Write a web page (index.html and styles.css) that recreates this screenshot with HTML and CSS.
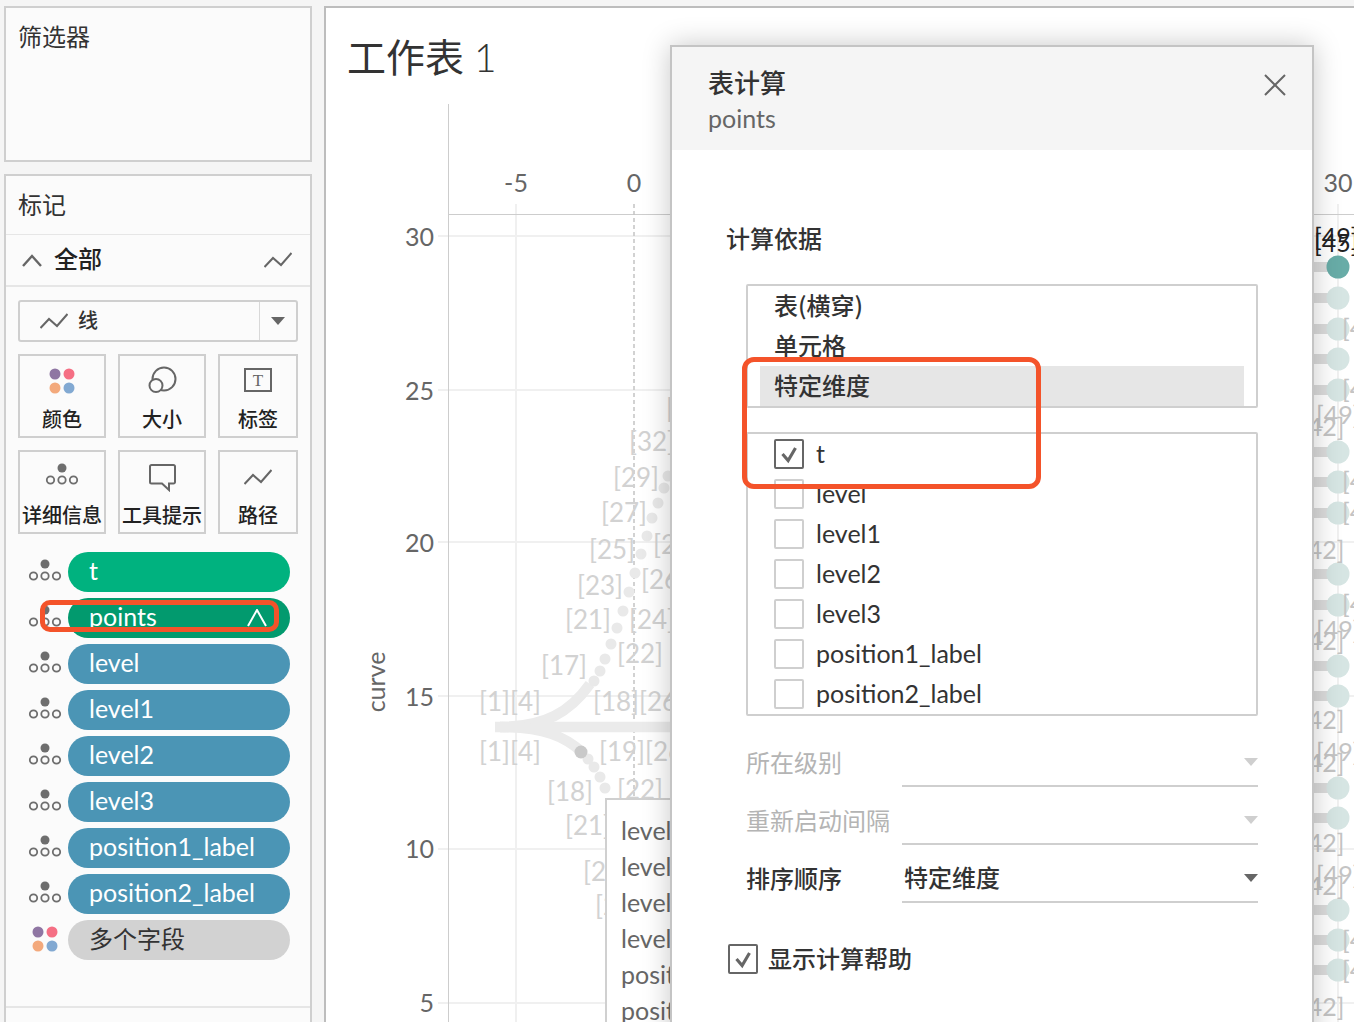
FILE: index.html
```html
<!DOCTYPE html>
<html lang="zh">
<head>
<meta charset="utf-8">
<title>工作表 1</title>
<link rel="stylesheet" href="styles.css">
</head>
<body>
<svg class="defs" width="0" height="0" aria-hidden="true">
  <defs>
    <symbol id="i-line" viewBox="0 0 28 16"><polyline points="0.5,15 9,6 17,13 27.5,1" fill="none" stroke="#666" stroke-width="2"/></symbol>
    <symbol id="i-detail" viewBox="0 0 34 28">
      <circle cx="17" cy="5" r="4.5" fill="#6e6e6e"/>
      <circle cx="5.5" cy="17" r="3.7" fill="none" stroke="#6e6e6e" stroke-width="1.8"/>
      <circle cx="17" cy="17" r="3.7" fill="none" stroke="#6e6e6e" stroke-width="1.8"/>
      <circle cx="28.5" cy="17" r="3.7" fill="none" stroke="#6e6e6e" stroke-width="1.8"/>
    </symbol>
    <symbol id="i-colors" viewBox="0 0 30 30">
      <circle cx="8" cy="8" r="5.5" fill="#8f76a3"/>
      <circle cx="22" cy="8" r="5.5" fill="#f56f84"/>
      <circle cx="8" cy="22" r="5.5" fill="#f3a97c"/>
      <circle cx="22" cy="22" r="5.5" fill="#82a9d2"/>
    </symbol>
    <symbol id="i-check" viewBox="0 0 30 30"><polyline points="7.500,15 14,22.500 22.500,8" fill="none" stroke="#666" stroke-width="3.600"/></symbol>
  </defs>
</svg>

<div class="side">
  <section class="panel filters">
    <h2 class="panel-title">筛选器</h2>
  </section>
  <section class="panel marks">
    <h2 class="marks-title">标记</h2>
    <div class="all-row">
      <svg class="chev" viewBox="0 0 20 14"><polyline points="1,13 10,3 19,13" fill="none" stroke="#666" stroke-width="2.4"/></svg>
      <span class="all-label">全部</span>
      <svg class="ic-line"><use href="#i-line"/></svg>
    </div>
    <div class="marks-body">
      <div class="mark-select">
        <div class="mark-type">
          <svg class="ic-line"><use href="#i-line"/></svg>
          <span class="mark-name">线</span>
        </div>
        <div class="mark-arrow"><span class="tri"></span></div>
      </div>
      <div class="cards">
        <div class="card"><svg class="card-icon" viewBox="0 0 30 30"><use href="#i-colors"/></svg><span>颜色</span></div>
        <div class="card"><svg class="card-icon" viewBox="0 0 30 30"><circle cx="17" cy="13" r="11.5" fill="none" stroke="#666" stroke-width="2"/><circle cx="9" cy="19.5" r="6.5" fill="#fbfbfb" stroke="#666" stroke-width="2"/></svg><span>大小</span></div>
        <div class="card"><svg class="card-icon" viewBox="0 0 30 30"><rect x="2" y="3" width="26" height="22" fill="none" stroke="#666" stroke-width="2"/><text x="15" y="20" class="t-glyph">T</text></svg><span>标签</span></div>
        <div class="card"><svg class="card-icon" viewBox="0 0 34 28"><use href="#i-detail"/></svg><span>详细信息</span></div>
        <div class="card"><svg class="card-icon" viewBox="0 0 30 30"><path d="M3 4.5a1.5 1.5 0 0 1 1.500-1.500H26.500a1.500 1.500 0 0 1 1.500 1.500V20a1.500 1.500 0 0 1-1.500 1.500H22V28l-7-6.500H4.500A1.500 1.500 0 0 1 3 20Z" fill="none" stroke="#666" stroke-width="2"/></svg><span>工具提示</span></div>
        <div class="card"><svg class="card-icon path-icon"><use href="#i-line"/></svg><span>路径</span></div>
      </div>
      <ul class="pills">
        <li class="pill-row"><svg class="pill-icon"><use href="#i-detail"/></svg><div class="pill green">t</div></li>
        <li class="pill-row"><svg class="pill-icon"><use href="#i-detail"/></svg><div class="pill dark-green"><span>points</span><svg class="pill-caret" viewBox="0 0 20 18"><polyline points="1,17 10,1 19,17" fill="none" stroke="#fff" stroke-width="2"/></svg></div></li>
        <li class="pill-row"><svg class="pill-icon"><use href="#i-detail"/></svg><div class="pill blue">level</div></li>
        <li class="pill-row"><svg class="pill-icon"><use href="#i-detail"/></svg><div class="pill blue">level1</div></li>
        <li class="pill-row"><svg class="pill-icon"><use href="#i-detail"/></svg><div class="pill blue">level2</div></li>
        <li class="pill-row"><svg class="pill-icon"><use href="#i-detail"/></svg><div class="pill blue">level3</div></li>
        <li class="pill-row"><svg class="pill-icon"><use href="#i-detail"/></svg><div class="pill blue">position1_label</div></li>
        <li class="pill-row"><svg class="pill-icon"><use href="#i-detail"/></svg><div class="pill blue">position2_label</div></li>
        <li class="pill-row"><svg class="pill-icon pill-colors"><use href="#i-colors"/></svg><div class="pill grey">多个字段</div></li>
      </ul>
    </div>
    <h2 class="next-title">度量值</h2>
  </section>
</div>

<main class="sheet">
  <h1 class="sheet-title">工作表 <span class="thin">1</span></h1>
  <svg class="chart" viewBox="326 104 1028 918">
    <g class="grid">
      <line x1="516" y1="204" x2="516" y2="1022"/>
      <line x1="1338" y1="204" x2="1338" y2="1022"/>
      <line x1="438" y1="236" x2="1354" y2="236"/>
      <line x1="438" y1="390" x2="1354" y2="390"/>
      <line x1="438" y1="542" x2="1354" y2="542"/>
      <line x1="438" y1="696" x2="1354" y2="696"/>
      <line x1="438" y1="849" x2="1354" y2="849"/>
      <line x1="438" y1="1003" x2="1354" y2="1003"/>
    </g>
    <line class="axis" x1="448.500" y1="104" x2="448.500" y2="1022"/>
    <line class="axis" x1="448" y1="214.500" x2="1354" y2="214.500"/>
    <line class="zero" x1="634" y1="204" x2="634" y2="1022"/>

    <g class="ticks">
      <text x="516" y="192" class="mid">-5</text>
      <text x="634" y="192" class="mid">0</text>
      <text x="1338" y="192" class="mid">30</text>
      <text x="434" y="246" class="end">30</text>
      <text x="434" y="400" class="end">25</text>
      <text x="434" y="552" class="end">20</text>
      <text x="434" y="706" class="end">15</text>
      <text x="434" y="858" class="end">10</text>
      <text x="434" y="1012" class="end">5</text>
      <text transform="translate(385 682) rotate(-90)" class="mid">curve</text>
    </g>

    <g class="curves">
      <line x1="495" y1="727" x2="672" y2="727"/>
      <path d="M500 727C545 727 570 712 590 684"/>
      <path d="M500 727C545 727 565 737 582 752"/>
    </g>
    <g class="dots">
      <circle cx="594" cy="681" r="5.500"/><circle cx="600" cy="671" r="5.500"/><circle cx="605" cy="659" r="5.500"/>
      <circle cx="611" cy="644" r="5.500"/><circle cx="617" cy="628" r="5.500"/><circle cx="623" cy="611" r="5.500"/>
      <circle cx="629" cy="592" r="5.500"/><circle cx="635" cy="573" r="5.500"/><circle cx="641" cy="554" r="5.500"/>
      <circle cx="647" cy="536" r="5.500"/><circle cx="652" cy="518" r="5.500"/><circle cx="658" cy="503" r="5.500"/>
      <circle cx="664" cy="488" r="5.500"/><circle cx="668" cy="476" r="5.500"/>
      <circle cx="588" cy="759" r="5.500"/><circle cx="594" cy="767" r="5.500"/><circle cx="600" cy="777" r="5.500"/><circle cx="605" cy="788" r="5.500"/>
    </g>
    <circle cx="581" cy="752" r="6.500" class="dot-dark"/>

    <g class="marks-text">
      <text x="666" y="418">[35]</text>
      <text x="629" y="451">[32]</text>
      <text x="613" y="487">[29]</text>
      <text x="601" y="522">[27]</text>
      <text x="589" y="559">[25]</text>
      <text x="653" y="554">[28]</text>
      <text x="577" y="595">[23]</text>
      <text x="641" y="589">[26]</text>
      <text x="565" y="629">[21]</text>
      <text x="629" y="629">[24]</text>
      <text x="617" y="663">[22]</text>
      <text x="541" y="675">[17]</text>
      <text x="479" y="711">[1][4]</text>
      <text x="593" y="711">[18][26]</text>
      <text x="479" y="761">[1][4]</text>
      <text x="599" y="761">[19][26]</text>
      <text x="547" y="801">[18]</text>
      <text x="617" y="799">[22]</text>
      <text x="565" y="835">[21]</text>
      <text x="583" y="881">[24]</text>
      <text x="595" y="915">[27]</text>
    </g>

    <g class="strip-lines">
      <line x1="1314" y1="267" x2="1330" y2="267"/><line x1="1314" y1="298" x2="1330" y2="298"/>
      <line x1="1314" y1="329" x2="1330" y2="329"/><line x1="1314" y1="359" x2="1330" y2="359"/>
      <line x1="1314" y1="390" x2="1330" y2="390"/><line x1="1314" y1="452" x2="1330" y2="452"/>
      <line x1="1314" y1="482" x2="1330" y2="482"/><line x1="1314" y1="513" x2="1330" y2="513"/>
      <line x1="1314" y1="574" x2="1330" y2="574"/><line x1="1314" y1="605" x2="1330" y2="605"/>
      <line x1="1314" y1="666" x2="1330" y2="666"/><line x1="1314" y1="696" x2="1330" y2="696"/>
      <line x1="1314" y1="788" x2="1330" y2="788"/><line x1="1314" y1="818" x2="1330" y2="818"/>
      <line x1="1314" y1="910" x2="1330" y2="910"/><line x1="1314" y1="940" x2="1330" y2="940"/>
      <line x1="1314" y1="970" x2="1330" y2="970"/>
    </g>
    <circle cx="1338" cy="267" r="11.500" class="strip-dark"/>
    <g class="strip-dots">
      <circle cx="1338" cy="298" r="11.500"/><circle cx="1338" cy="329" r="11.500"/><circle cx="1338" cy="359" r="11.500"/>
      <circle cx="1338" cy="390" r="11.500"/><circle cx="1338" cy="452" r="11.500"/><circle cx="1338" cy="482" r="11.500"/>
      <circle cx="1338" cy="513" r="11.500"/><circle cx="1338" cy="574" r="11.500"/><circle cx="1338" cy="605" r="11.500"/>
      <circle cx="1338" cy="666" r="11.500"/><circle cx="1338" cy="696" r="11.500"/><circle cx="1338" cy="788" r="11.500"/>
      <circle cx="1338" cy="818" r="11.500"/><circle cx="1338" cy="910" r="11.500"/><circle cx="1338" cy="940" r="11.500"/>
      <circle cx="1338" cy="970" r="11.500"/>
    </g>
    <g class="strip-text">
      <text x="1342" y="337">[49]</text><text x="1342" y="398">[49]</text>
      <text x="1316" y="424">[49]</text><text x="1300" y="436">[42]</text>
      <text x="1342" y="490">[49]</text><text x="1342" y="521">[49]</text>
      <text x="1300" y="559">[42]</text>
      <text x="1342" y="613">[49]</text>
      <text x="1316" y="639">[49]</text><text x="1300" y="650">[42]</text>
      <text x="1300" y="729">[42]</text>
      <text x="1316" y="761">[49]</text><text x="1300" y="772">[42]</text>
      <text x="1300" y="852">[42]</text>
      <text x="1316" y="884">[49]</text><text x="1300" y="895">[42]</text>
      <text x="1342" y="949">[49]</text><text x="1342" y="979">[49]</text>
      <text x="1300" y="1016">[42]</text>
    </g>
    <g class="strip-black">
      <text x="1314" y="246">[49]</text>
      <text x="1314" y="252">[45]</text>
    </g>
  </svg>

  <div class="tooltip">
    <div>level: 1</div>
    <div>level1: 1</div>
    <div>level2: 1</div>
    <div>level3: 1</div>
    <div>position1_label: 1</div>
    <div>position2_label: 1</div>
  </div>

  <aside class="dialog">
    <header class="dialog-head">
      <div>
        <div class="dialog-title">表计算</div>
        <div class="dialog-sub">points</div>
      </div>
      <svg class="close" viewBox="0 0 22 22"><path d="M1 1 21 21M21 1 1 21" fill="none" stroke="#666" stroke-width="2"/></svg>
    </header>
    <div class="dialog-body">
      <div class="section-label">计算依据</div>
      <ul class="calc-list">
        <li>表(横穿)</li>
        <li>单元格</li>
        <li class="selected">特定维度</li>
      </ul>
      <ul class="dim-list">
        <li><span class="box checked"><svg viewBox="0 0 30 30"><use href="#i-check"/></svg></span><span class="dim-name">t</span></li>
        <li><span class="box"></span><span class="dim-name">level</span></li>
        <li><span class="box"></span><span class="dim-name">level1</span></li>
        <li><span class="box"></span><span class="dim-name">level2</span></li>
        <li><span class="box"></span><span class="dim-name">level3</span></li>
        <li><span class="box"></span><span class="dim-name">position1_label</span></li>
        <li><span class="box"></span><span class="dim-name">position2_label</span></li>
      </ul>
      <div class="field disabled first">
        <span class="field-label">所在级别</span>
        <div class="field-select"><span></span><span class="tri"></span></div>
      </div>
      <div class="field disabled">
        <span class="field-label">重新启动间隔</span>
        <div class="field-select"><span></span><span class="tri"></span></div>
      </div>
      <div class="field">
        <span class="field-label">排序顺序</span>
        <div class="field-select"><span class="field-value">特定维度</span><span class="tri"></span></div>
      </div>
      <div class="help-row">
        <span class="box checked"><svg viewBox="0 0 30 30"><use href="#i-check"/></svg></span>
        <span>显示计算帮助</span>
      </div>
    </div>
  </aside>
</main>

<div class="note note-pill"></div>
<div class="note note-dims"></div>
</body>
</html>
```
FILE: styles.css
```css
* { box-sizing: border-box; }
html, body { height: 100%; }
body {
  margin: 0;
  padding: 6px 0 0 4px;
  display: flex;
  gap: 12px;
  overflow: hidden;
  background: #f5f5f5;
  color: #333;
  font-family: Lato, "Noto Sans CJK SC", sans-serif;
  font-size: 24px;
}
h1, h2, ul { margin: 0; padding: 0; font-weight: 400; list-style: none; }
.defs { position: absolute; }

/* left column */
.side { width: 308px; flex: none; display: flex; flex-direction: column; gap: 12px; height: 1100px; }
.panel { background: #fbfbfb; border: 2px solid #cfcfcf; }
.filters { height: 156px; padding: 12px 12px; }
.panel-title { font-size: 24px; line-height: 34px; }
.marks { flex: 1; }
.marks-title { height: 59px; line-height: 58px; padding-left: 12px; font-size: 24px; border-bottom: 1px solid #e6e6e6; }
.all-row { height: 52px; display: flex; align-items: center; padding: 0 18px 0 16px; border-bottom: 2px solid #e6e6e6; }
.chev { width: 20px; height: 14px; margin-right: 12px; }
.all-label { flex: 1; font-size: 24px; line-height: 30px; padding-bottom: 2px; color: #222; font-weight: 500; }
.ic-line { width: 28px; height: 16px; flex: none; }
.marks-body { padding: 13px 20px 0 12px; }
.mark-select { display: flex; height: 42px; border: 2px solid #cfcfcf; border-radius: 3px; margin-right: -8px; width: 280px; }
.mark-type { flex: 1; display: flex; align-items: center; gap: 10px; padding-left: 20px; font-size: 20px; font-weight: 500; border-right: 1px solid #d8d8d8; }
.mark-name { line-height: 28px; padding-bottom: 2px; }
.mark-arrow { width: 36px; display: flex; align-items: center; justify-content: center; }
.tri { width: 0; height: 0; border: 7px solid transparent; border-top: 8px solid #666; border-bottom: 0; }
.cards { display: grid; grid-template-columns: 88px 88px 80px; gap: 12px; margin-top: 12px; width: 280px; }
.card { height: 84px; border: 2px solid #cfcfcf; display: flex; flex-direction: column; align-items: center; padding-top: 10px; font-size: 20px; font-weight: 500; color: #222; }
.card span { line-height: 28px; margin-top: 9px; white-space: nowrap; }
.card-icon { width: 30px; height: 30px; flex: none; }
.card:nth-child(4) .card-icon { width: 34px; height: 30px; }
.path-icon { width: 28px; height: 30px; }
.t-glyph { font-family: "Liberation Serif", serif; font-size: 17px; font-weight: 400; text-anchor: middle; fill: #666; }
.pills { margin-top: 18px; display: flex; flex-direction: column; gap: 6px; }
.pill-row { display: flex; align-items: center; gap: 6px; padding-left: 10px; }
.pill-icon { width: 34px; height: 28px; flex: none; margin-top: 2px; }
.pill-colors { width: 34px; height: 30px; margin-top: -2px; }
.pill { flex: 1; height: 40px; border-radius: 20px; padding: 0 23px 4px 21px; line-height: 36px; color: #fff; font-size: 25px; display: flex; justify-content: space-between; align-items: center; white-space: nowrap; }
.green { background: #00b27f; }
.dark-green { background: #029a6e; }
.blue { background: #4b95b5; }
.grey { background: #d2d2d2; color: #333; font-size: 24px; padding-bottom: 2px; }
.pill-caret { width: 20px; height: 18px; margin-top: 4px; }
.next-title { margin-top: 46px; border-top: 2px solid #e6e6e6; padding: 10px 12px 0; font-size: 24px; line-height: 34px; }

/* sheet */
.sheet { position: relative; flex: 1; height: 1100px; background: #fff; border: solid #bdbdbd; border-width: 2px 0 0 2px; }
.sheet-title { padding: 21px 0 19px 21px; font-size: 39px; line-height: 56px; color: #333; }
.thin { font-weight: 300; }
.chart { display: block; width: 1028px; height: 918px; font-family: Lato, sans-serif; }
.grid line { stroke: #f0f0f0; stroke-width: 2; }
.axis { stroke: #cdcdcd; stroke-width: 1; }
.zero { stroke: #c4c4c4; stroke-width: 1.5; stroke-dasharray: 4 3; }
.ticks text { font-size: 25px; fill: #666; }
.mid { text-anchor: middle; }
.end { text-anchor: end; }
.curves line, .curves path { fill: none; stroke: #ebebeb; stroke-width: 10.500; }
.dots circle { fill: #e9e9e9; }
.dot-dark { fill: #c9c9c9; }
.marks-text text { font-size: 26px; fill: #d2d2d2; }
.strip-lines line { stroke: #dcdcdc; stroke-width: 10; }
.strip-dark { fill: #68aca7; }
.strip-dots circle { fill: #d6e5e3; }
.strip-text text { font-size: 25px; fill: #c4c4c4; }
.strip-black text { font-size: 25px; fill: #222; }

.tooltip { position: absolute; left: 279px; top: 790px; width: 300px; height: 320px; background: #fff; border: 2px solid #d0d0d0; padding: 12px 0 0 14px; font-size: 25px; line-height: 36px; color: #666; white-space: nowrap; }

/* dialog */
.dialog { position: absolute; left: 344px; top: 37px; width: 644px; height: 1060px; background: #fff; border: 2px solid #c4c4c4; border-bottom: 0; box-shadow: 0 0 26px rgba(0,0,0,.22); }
.dialog-head { height: 103px; background: #f5f5f5; padding: 22px 26px 0 36px; display: flex; justify-content: space-between; }
.dialog-title { font-size: 26px; font-weight: 500; line-height: 28px; color: #333; }
.dialog-sub { margin-top: 7px; font-size: 25px; line-height: 28px; color: #666; }
.close { width: 22px; height: 22px; margin-top: 5px; }
.dialog-body { padding: 73px 54px 0; }
.section-label { line-height: 32px; font-weight: 500; }
.calc-list { margin: 29px 0 0 20px; height: 124px; border: 2px solid #cfcfcf; border-radius: 2px; padding: 0 12px; font-family: "Noto Sans CJK SC", sans-serif; font-weight: 500; }
.calc-list li { height: 40px; line-height: 38px; padding-left: 14px; }
.calc-list .selected { background: #e6e6e6; }
.dim-list { margin: 24px 0 0 20px; height: 284px; border: 2px solid #cfcfcf; border-radius: 2px; padding-left: 26px; }
.dim-list li { height: 40px; display: flex; align-items: center; gap: 12px; font-size: 25px; }
.dim-name { line-height: 30px; padding-bottom: 2px; }
.box { width: 30px; height: 30px; flex: none; border: 2px solid #cfcfcf; border-radius: 2px; display: block; }
.box svg { display: block; width: 26px; height: 26px; }
.box.checked { border-color: #666; }
.field { margin: 12px 0 0 20px; height: 46px; display: flex; align-items: center; }
.field.first { margin-top: 25px; }
.field-label { width: 156px; flex: none; line-height: 30px; padding-bottom: 2px; font-weight: 500; }
.field-select { flex: 1; height: 46px; border-bottom: 2px solid #cfcfcf; padding: 0 0 2px 2px; display: flex; align-items: center; justify-content: space-between; }
.field-value { line-height: 30px; font-weight: 500; }
.disabled .field-label { color: #b4b4b4; font-weight: 400; }
.disabled .tri { border-top-color: #cfcfcf; }
.help-row { margin: 41px 0 0 2px; display: flex; align-items: center; gap: 10px; line-height: 30px; font-weight: 500; }

/* red annotations */
.note { position: absolute; border: 5px solid #f4532a; border-radius: 12px; }
.note-pill { left: 40px; top: 600px; width: 239px; height: 32px; border-radius: 10px; }
.note-dims { left: 742px; top: 357px; width: 299px; height: 132px; }
```
